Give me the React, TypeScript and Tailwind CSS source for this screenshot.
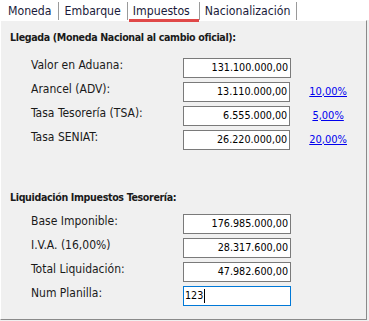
import React from "react";

const font = { fontFamily: '"DejaVu Sans Condensed", "DejaVu Sans", Tahoma, sans-serif' };

function Row({ label, value, link, focused }: { label: string; value: string; link?: string; focused?: boolean }) {
  return (
    <div className="flex items-start h-5">
      <div className="w-[182px] pl-[30px] leading-[14px] text-[12px] text-[#1a1a1a]">{label}</div>
      <div
        className={
          "w-[108px] h-5 bg-white border flex items-center text-[10.7px] leading-none " +
          (focused ? "border-[#0078d7] justify-start pl-[1px]" : "border-[#7a7a7a] justify-end pr-[2px]")
        }
      >
        <span className="text-black">{value}</span>
        {focused && <span className="w-px h-[14px] bg-black ml-[1px]" />}
      </div>
      {link && (
        <div className="w-[76px] h-5 flex items-center justify-center text-[11px] text-[#0000ee] underline">{link}</div>
      )}
    </div>
  );
}

export default function App() {
  return (
    <div className="w-[369px] h-[321px] bg-[#f0f0f0] flex flex-col" style={font}>
      <div className="h-5 flex items-end pl-[2px] bg-white">
        <div className="h-[18px] flex items-center text-[12.2px] text-[#1a1a3a]">
          <div className="pl-[6px] pr-[6px] h-full flex items-center border-r border-[#9a9a9a]">Moneda</div>
          <div className="pl-[6px] pr-[6px] h-full flex items-center border-r border-[#9a9a9a]">Embarque</div>
          <div className="relative pl-[5px] pr-[9px] h-full flex items-center border-r border-[#9a9a9a]">
            Impuestos
            <div className="absolute left-[1px] right-0 bottom-[-2px] h-[3px] bg-[#e04848]" />
          </div>
          <div className="pl-[5px] pr-[5px] h-full flex items-center border-r border-[#9a9a9a]">Nacionalización</div>
        </div>
      </div>
      <div className="flex-1 mr-[2px] mb-px border-l border-t border-white border-r border-b border-r-[#8a8a8a] border-b-[#8a8a8a] flex flex-col">
        <div className="mt-[8px] pl-[9px] leading-[16px] text-[10.6px] tracking-[-0.35px] font-bold text-[#1a1a1a]">
          Llegada (Moneda Nacional al cambio oficial):
        </div>
        <div className="mt-[13px] flex flex-col gap-1">
          <Row label="Valor en Aduana:" value="131.100.000,00" />
          <Row label="Arancel (ADV):" value="13.110.000,00" link="10,00%" />
          <Row label="Tasa Tesorería (TSA):" value="6.555.000,00" link="5,00%" />
          <Row label="Tasa SENIAT:" value="26.220.000,00" link="20,00%" />
        </div>
        <div className="mt-[39px] pl-[9px] leading-[16px] text-[10.6px] tracking-[-0.35px] font-bold text-[#1a1a1a]">
          Liquidación Impuestos Tesorería:
        </div>
        <div className="mt-[9px] flex flex-col gap-1">
          <Row label="Base Imponible:" value="176.985.000,00" />
          <Row label="I.V.A. (16,00%)" value="28.317.600,00" />
          <Row label="Total Liquidación:" value="47.982.600,00" />
          <Row label="Num Planilla:" value="123" focused />
        </div>
      </div>
    </div>
  );
}
